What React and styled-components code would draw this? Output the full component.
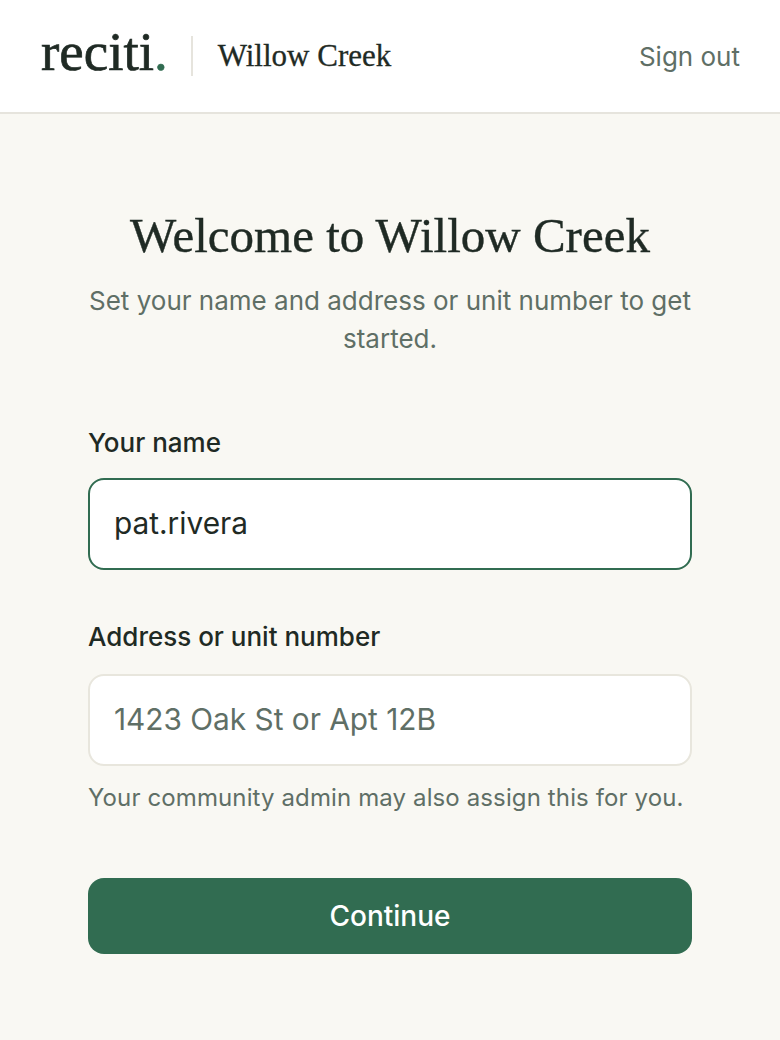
import React from "react";
import styled, { createGlobalStyle } from "styled-components";

const serif = `"Liberation Serif", serif`;
const sans = `Inter, "Noto Sans", sans-serif`;

export default function App() {
  return (
    <>
      <GlobalStyle />
      <Page>
        <Header>
          <Brand>
            <Logo>
              reciti<LogoDot>.</LogoDot>
            </Logo>
            <Divider />
            <Community>Willow Creek</Community>
          </Brand>
          <SignOut href="#">Sign out</SignOut>
        </Header>

        <Main>
          <Title>Welcome to Willow Creek</Title>
          <Subtitle>Set your name and address or unit number to get started.</Subtitle>

          <Form>
            <Field>
              <Label htmlFor="name" $gap={17}>Your name</Label>
              <Input id="name" $focused defaultValue="pat.rivera" />
            </Field>
            <Field>
              <Label htmlFor="address" $gap={19}>Address or unit number</Label>
              <Input id="address" placeholder="1423 Oak St or Apt 12B" />
              <Hint>Your community admin may also assign this for you.</Hint>
            </Field>
            <Submit type="button">Continue</Submit>
          </Form>
        </Main>
      </Page>
    </>
  );
}

const GlobalStyle = createGlobalStyle`
  * {
    box-sizing: border-box;
  }

  body {
    margin: 0;
    background: #f9f8f3;
    font-family: ${sans};
  }
`;

const Page = styled.div`
  min-height: 1040px;
  background: #f9f8f3;
`;

const Header = styled.header`
  height: 114px;
  padding: 0 40px;
  display: flex;
  align-items: center;
  justify-content: space-between;
  background: #fff;
  border-bottom: 2px solid #e6e4dd;
`;

const Brand = styled.div`
  display: flex;
  align-items: center;
`;

const Logo = styled.div`
  padding: 0 0 8px 1px;
  font-family: ${serif};
  font-size: 55px;
  line-height: 40px;
  color: #1f2a24;
  -webkit-text-stroke: 0.7px #1f2a24;
`;

const LogoDot = styled.span`
  color: #316c51;
  -webkit-text-stroke: 0.7px #316c51;
`;

const Divider = styled.span`
  width: 2px;
  height: 40px;
  margin: 0 25px 0 23px;
  background: #e6e4dd;
`;

const Community = styled.div`
  font-family: ${serif};
  font-size: 31px;
  color: #1f2a24;
  -webkit-text-stroke: 0.3px #1f2a24;
`;

const SignOut = styled.a`
  font-size: 26px;
  color: #5f6f66;
  text-decoration: none;
`;

const Main = styled.main`
  padding: 94px 88px 0;
`;

const Title = styled.h1`
  margin: 0;
  font-family: ${serif};
  font-size: 49px;
  line-height: 56px;
  font-weight: 400;
  text-align: center;
  color: #1f2a24;
  -webkit-text-stroke: 0.4px #1f2a24;
`;

const Subtitle = styled.p`
  margin: 18px 0 0;
  font-size: 26px;
  line-height: 38px;
  text-align: center;
  color: #5f6f66;
`;

const Form = styled.form`
  margin-top: 67px;
  display: flex;
  flex-direction: column;
  gap: 49px;
`;

const Field = styled.div`
  display: flex;
  flex-direction: column;
`;

const Label = styled.label`
  font-size: 26px;
  line-height: 36px;
  font-weight: 500;
  color: #1f2a24;
  margin-bottom: ${(p) => p.$gap}px;
`;

const Input = styled.input`
  height: 92px;
  padding: 0 24px 2px;
  font-family: ${sans};
  font-size: 29.8px;
  color: #1f2a24;
  background: #fff;
  border: 2px solid ${(p) => (p.$focused ? "#316c51" : "#e8e6dd")};
  border-radius: 16px;
  outline: none;

  &::placeholder {
    color: #5f6f66;
    opacity: 1;
  }
`;

const Hint = styled.div`
  margin-top: 14px;
  font-size: 24px;
  letter-spacing: 0.12px;
  line-height: 36px;
  color: #5f6f66;
`;

const Submit = styled.button`
  height: 76px;
  margin-top: 13px;
  border: none;
  border-radius: 16px;
  background: #316c51;
  color: #fff;
  font-family: ${sans};
  font-size: 28px;
  font-weight: 500;
`;
